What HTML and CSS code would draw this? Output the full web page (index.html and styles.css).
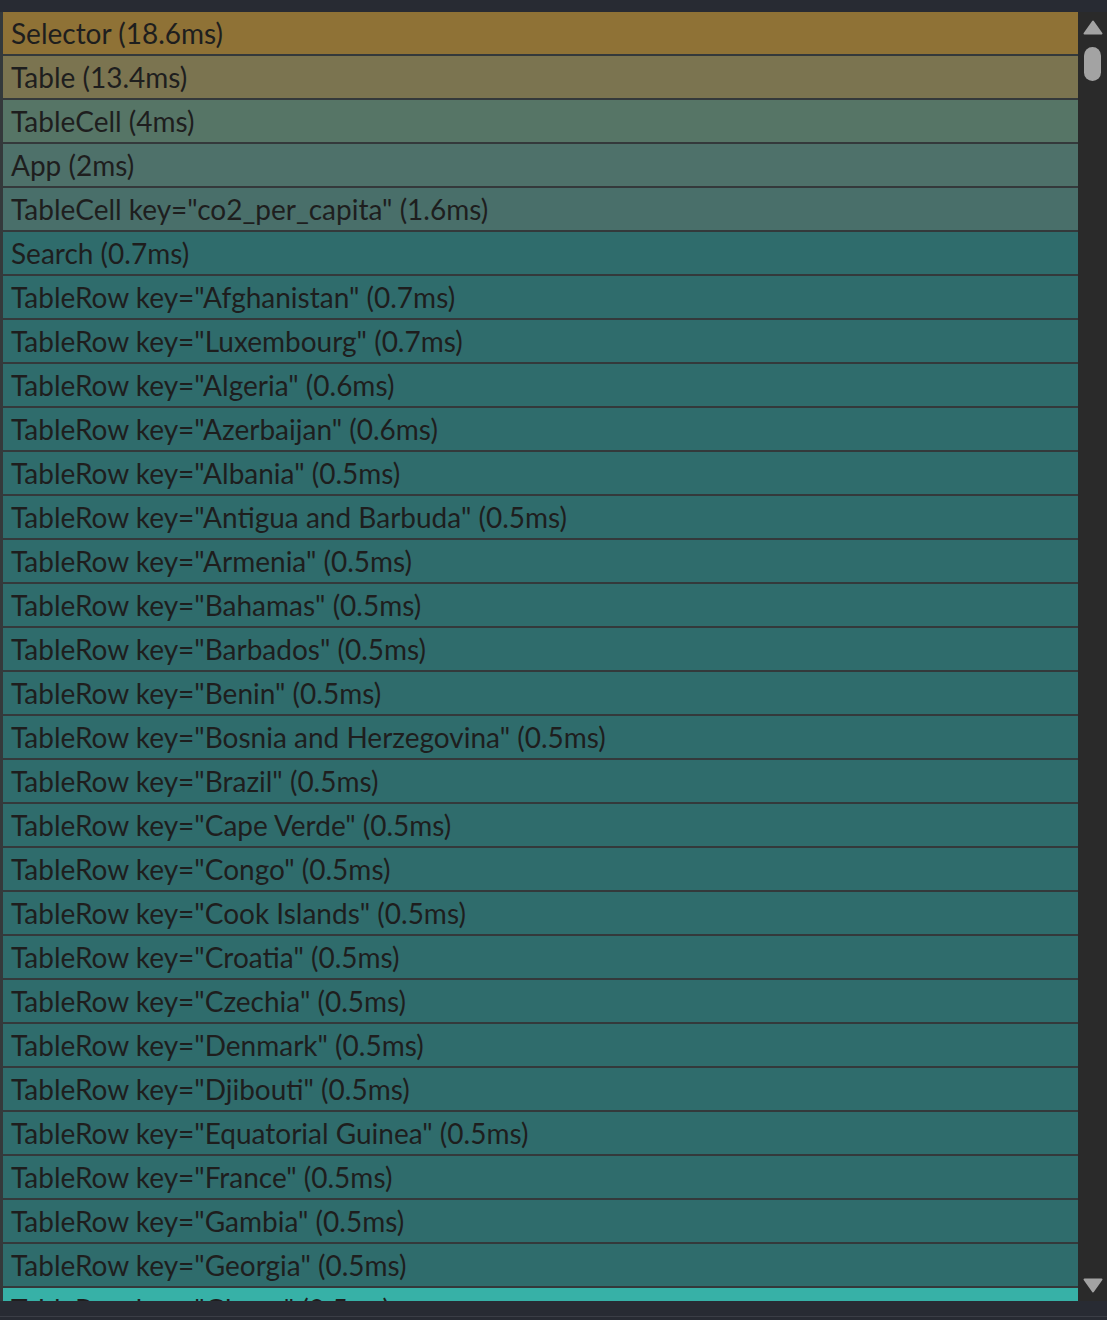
FILE: index.html
```html
<!DOCTYPE html>
<html lang="en">
<head>
<meta charset="utf-8">
<title>Ranked chart</title>
<link rel="stylesheet" href="styles.css">
</head>
<body>
<div class="frame">
  <div class="viewport">
    <div class="list">
      <div class="row c1">Selector (18.6ms)</div>
      <div class="row c2">Table (13.4ms)</div>
      <div class="row c3">TableCell (4ms)</div>
      <div class="row c4">App (2ms)</div>
      <div class="row c5">TableCell key="co2_per_capita" (1.6ms)</div>
      <div class="row c6">Search (0.7ms)</div>
      <div class="row c6">TableRow key="Afghanistan" (0.7ms)</div>
      <div class="row c6">TableRow key="Luxembourg" (0.7ms)</div>
      <div class="row c6">TableRow key="Algeria" (0.6ms)</div>
      <div class="row c6">TableRow key="Azerbaijan" (0.6ms)</div>
      <div class="row c6">TableRow key="Albania" (0.5ms)</div>
      <div class="row c6">TableRow key="Antigua and Barbuda" (0.5ms)</div>
      <div class="row c6">TableRow key="Armenia" (0.5ms)</div>
      <div class="row c6">TableRow key="Bahamas" (0.5ms)</div>
      <div class="row c6">TableRow key="Barbados" (0.5ms)</div>
      <div class="row c6">TableRow key="Benin" (0.5ms)</div>
      <div class="row c6">TableRow key="Bosnia and Herzegovina" (0.5ms)</div>
      <div class="row c6">TableRow key="Brazil" (0.5ms)</div>
      <div class="row c6">TableRow key="Cape Verde" (0.5ms)</div>
      <div class="row c6">TableRow key="Congo" (0.5ms)</div>
      <div class="row c6">TableRow key="Cook Islands" (0.5ms)</div>
      <div class="row c6">TableRow key="Croatia" (0.5ms)</div>
      <div class="row c6">TableRow key="Czechia" (0.5ms)</div>
      <div class="row c6">TableRow key="Denmark" (0.5ms)</div>
      <div class="row c6">TableRow key="Djibouti" (0.5ms)</div>
      <div class="row c6">TableRow key="Equatorial Guinea" (0.5ms)</div>
      <div class="row c6">TableRow key="France" (0.5ms)</div>
      <div class="row c6">TableRow key="Gambia" (0.5ms)</div>
      <div class="row c6">TableRow key="Georgia" (0.5ms)</div>
      <div class="row c7">TableRow key="Ghana" (0.5ms)</div>
    </div>
    <div class="scrollbar">
      <svg class="arrow up" width="20" height="15" viewBox="0 0 20 15"><path d="M10 1.5 L18.5 13.5 L1.5 13.5 Z" fill="#a3a3a3" stroke="#a3a3a3" stroke-width="2" stroke-linejoin="round"/></svg>
      <div class="track"><div class="thumb"></div></div>
      <svg class="arrow down" width="20" height="15" viewBox="0 0 20 15"><path d="M1.5 1.5 L18.5 1.5 L10 13.5 Z" fill="#a3a3a3" stroke="#a3a3a3" stroke-width="2" stroke-linejoin="round"/></svg>
    </div>
  </div>
  <div class="footer"></div>
</div>
</body>
</html>
```
FILE: styles.css
```css
html, body {
  margin: 0;
  padding: 0;
  background: #282b33;
}
.frame {
  padding-top: 12px;
  width: 1107px;
  height: 1320px;
  box-sizing: border-box;
  overflow: hidden;
}
.viewport {
  display: flex;
  height: 1289px;
  overflow: hidden;
}
.list {
  flex: 1;
  padding-left: 3px;
  background: #34393b;
  overflow: hidden;
}
.row {
  height: 42px;
  margin-bottom: 2px;
  line-height: 42px;
  padding-left: 8px;
  font-family: "Lato", "Liberation Sans", sans-serif;
  font-size: 28px;
  color: #1e1e1e;
  white-space: nowrap;
}
.c1 { background: #8f7236; }
.c2 { background: #7b7450; }
.c3 { background: #567566; }
.c4 { background: #4e716a; }
.c5 { background: #496f6a; }
.c6 { background: #2f6c6c; }
.c7 { background: #37b1a7; }
.scrollbar {
  width: 29px;
  background: #2a2a2a;
  display: flex;
  flex-direction: column;
  align-items: center;
  padding: 8px 0 8px;
  box-sizing: border-box;
}
.arrow { display: block; flex: none; }
.track {
  flex: 1;
  width: 100%;
  display: flex;
  justify-content: center;
  padding-top: 12px;
}
.thumb {
  width: 17px;
  height: 34px;
  border-radius: 9px;
  background: #a3a3a3;
}
.footer {
  height: 15px;
  border-bottom: 1px solid #3b3e46;
}
```
